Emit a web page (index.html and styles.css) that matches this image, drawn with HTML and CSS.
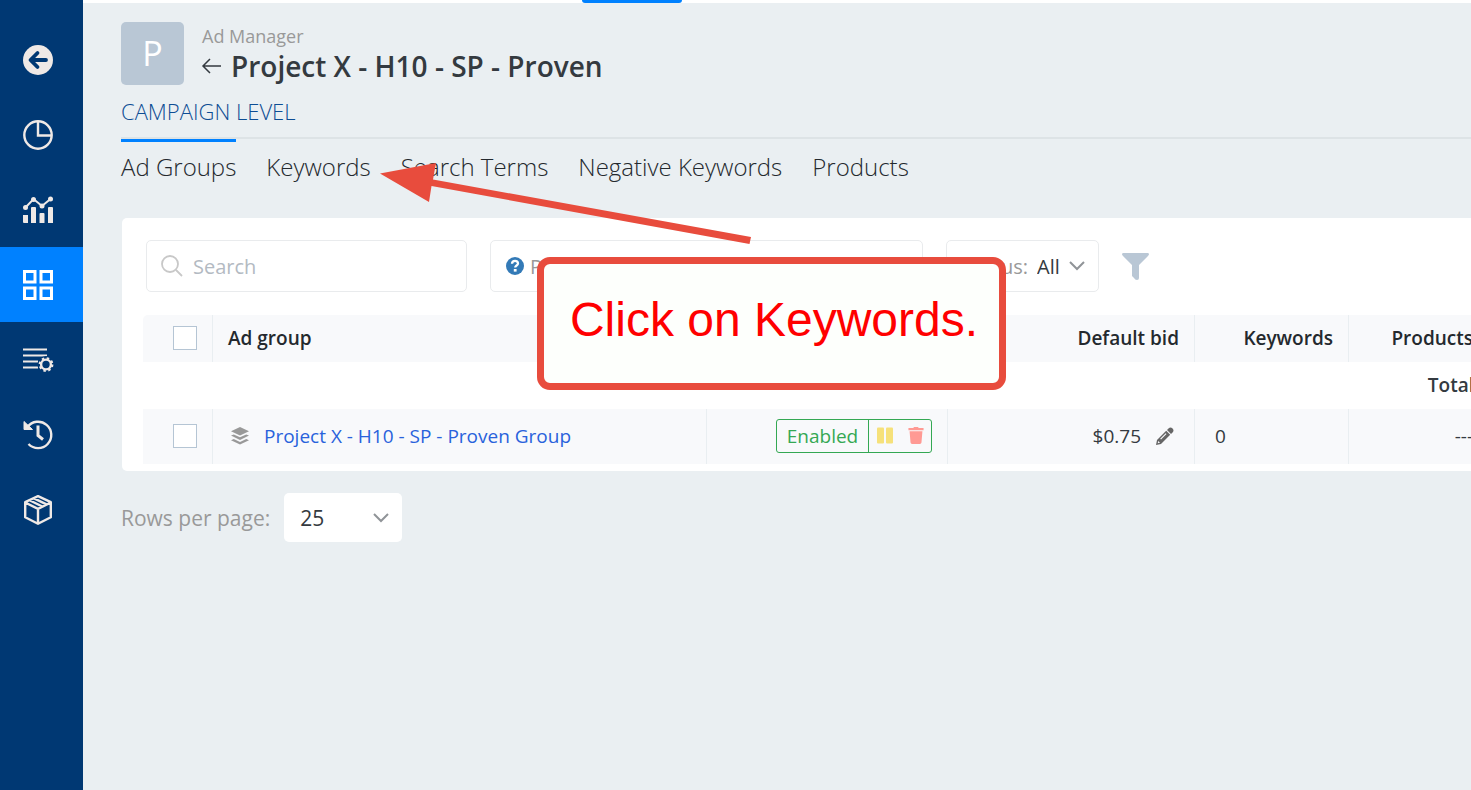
FILE: index.html
```html
<!DOCTYPE html>
<html lang="en">
<head>
    <meta charset="UTF-8">
    <meta name="viewport" content="width=device-width, initial-scale=1.0">
    <title>Ad Manager</title>
    <link rel="stylesheet" href="styles.css">
</head>
<body>
    <nav class="sidebar">
        <a href="#" aria-label="Back">
            <svg viewBox="0 0 30 30">
                <circle cx="15" cy="15" r="15" fill="#efe9e6"/>
                <path d="M14.500 8l-7 7 7 7M8 15H23" fill="none" stroke="#003873" stroke-width="3.800" stroke-linecap="round" stroke-linejoin="round"/>
            </svg>
        </a>
        <a href="#" aria-label="Dashboard">
            <svg viewBox="0 0 30 30" fill="none" stroke="#efe9e6" stroke-width="2.400">
                <circle cx="15" cy="15" r="13.700"/>
                <path d="M15 1v14.500h14"/>
            </svg>
        </a>
        <a href="#" aria-label="Analytics">
            <svg viewBox="0 0 30 30" fill="#efe9e6">
                <path d="M0 20h5v8H1a1 1 0 0 1-1-1zM8 13q0-1 1-1h3q1 0 1 1v15H8zM16.500 19q0-1 1-1h3q1 0 1 1v9h-5zM25 13q0-1 1-1h3q1 0 1 1v15h-5z"/>
                <path d="M2.500 12.500L10.500 4l8.500 7 8.500-7" fill="none" stroke="#efe9e6" stroke-width="2"/>
                <circle cx="2.500" cy="12.500" r="2.500"/>
                <circle cx="10.500" cy="4.500" r="2.500"/>
                <circle cx="19" cy="11" r="2.500"/>
                <circle cx="27.500" cy="4" r="2.500"/>
            </svg>
        </a>
        <a href="#" class="active" aria-label="Ad Manager">
            <svg viewBox="0 0 30 30" fill="none" stroke="#fff" stroke-width="3">
                <path d="M1.500 1.500h10.500v10.500H1.500zM18 1.500h10.500v10.500H18zM1.500 18h10.500v10.500H1.500zM18 18h10.500v10.500H18z"/>
            </svg>
        </a>
        <a href="#" aria-label="Rules">
            <svg viewBox="0 0 30 30" fill="none" stroke="#efe9e6" stroke-width="2.200">
                <path d="M0 4.500h24M0 10.500h24M0 16.500h15M0 22.500h15"/>
                <circle cx="23" cy="19.500" r="7.500" fill="#003873" stroke="#003873"/>
                <circle cx="23" cy="19.500" r="4.900" stroke-width="2.400"/>
                <circle cx="23" cy="19.500" r="6.300" stroke-dasharray="2.400 2.548"/>
            </svg>
        </a>
        <a href="#" aria-label="History">
            <svg viewBox="0 0 30 30" fill="none" stroke="#efe9e6" stroke-width="2.400">
                <path d="M4.500 7A13.200 13.200 0 1 1 5.500 24"/>
                <path d="M1 1.500v8h8.500z" fill="#efe9e6" stroke-width="1"/>
                <path d="M15 5.500v10l5 4" stroke-width="3"/>
            </svg>
        </a>
        <a href="#" aria-label="Products">
            <svg viewBox="0 0 30 30" fill="none" stroke="#efe9e6" stroke-width="2.400" stroke-linejoin="round">
                <path d="M15 1.200l12.800 6v15L15 28.800 2.200 22.200v-15zM2.200 7.500L15 13.800l12.800-6.300M15 13.800v15M7 5.500l12.300 6M11 3.300l12.500 6"/>
            </svg>
        </a>
    </nav>

    <div class="main">
        <div class="topbar"><span class="topbar-tab"></span></div>

        <header class="page-header">
            <div class="avatar">P</div>
            <div>
                <p class="crumb">Ad Manager</p>
                <h1>
                    <a href="#" aria-label="Back to campaigns"><svg viewBox="0 0 20 18" fill="none" stroke="#343a40" stroke-width="1.500"><path d="M8 2L1 9l7 7M1 9h18"/></svg></a>
                    Project X - H10 - SP - Proven
                </h1>
            </div>
        </header>

        <h2 class="level">CAMPAIGN LEVEL</h2>
        <nav class="tabs">
            <a href="#" class="active">Ad Groups</a>
            <a href="#">Keywords</a>
            <a href="#">Search Terms</a>
            <a href="#">Negative Keywords</a>
            <a href="#">Products</a>
        </nav>

        <section class="panel">
            <div class="filters">
                <label class="field search">
                    <svg viewBox="0 0 22 22" fill="none" stroke="#c8c8c8" stroke-width="1.800"><circle cx="9" cy="9" r="8"/><path d="M15 15l6 6"/></svg>
                    <input type="text" placeholder="Search" aria-label="Search">
                </label>
                <div class="field portfolio">
                    <svg viewBox="0 0 18 18"><circle cx="9" cy="9" r="9" fill="#337ab7"/><path d="M6 6.800C6.200 2.800 12 3 12 6.500c0 2-2.800 2-2.800 4" fill="none" stroke="#fff" stroke-width="2.300"/><path d="M7.800 12h2.800v2.600H7.800z" fill="#fff"/></svg>
                    <label for="portfolio">Portfolio:</label>
                    <select id="portfolio"><option>All</option></select>
                </div>
                <div class="field status">
                    <label for="status">Status:</label>
                    <select id="status"><option>All</option></select>
                    <svg class="chevron" viewBox="0 0 16 10"><path d="M1 1l7 7 7-7"/></svg>
                </div>
                <button class="filter-btn" aria-label="Filters">
                    <svg viewBox="0 0 27 27" fill="#b9c7d5"><path d="M1 0h25q2 1 0 3l-9 9v13q0 2-2 2-2 0-3-2l-2-2V12L1 3q-2-2 0-3z"/></svg>
                </button>
            </div>

            <div class="table-wrap">
                <table>
                    <colgroup>
                        <col class="col-check">
                        <col>
                        <col class="col-status">
                        <col class="col-bid">
                        <col class="col-keywords">
                        <col class="col-products">
                    </colgroup>
                    <thead>
                        <tr>
                            <th class="check"><input type="checkbox" aria-label="Select all"></th>
                            <th class="left">Ad group</th>
                            <th></th>
                            <th>Default bid</th>
                            <th>Keywords</th>
                            <th>Products</th>
                        </tr>
                    </thead>
                    <tbody>
                        <tr class="total">
                            <td colspan="6">Total</td>
                        </tr>
                        <tr class="item">
                            <td class="check"><input type="checkbox" aria-label="Select ad group"></td>
                            <td class="left">
                                <div class="name">
                                    <svg viewBox="0 0 18 18" fill="#999"><path d="M9 0l9 4.200-9 4.300L0 4.200zM0 8.600l2.800-1.200L9 10.300l6.200-2.900L18 8.600l-9 4.300zM0 13.200L2.800 12 9 14.900l6.200-2.900 2.800 1.200L9 17.500z"/></svg>
                                    <a href="#">Project X - H10 - SP - Proven Group</a>
                                </div>
                            </td>
                            <td>
                                <div class="state">
                                    <span>Enabled</span>
                                    <button aria-label="Pause"><svg viewBox="0 0 16 16" fill="#f6e17a"><rect width="7" height="16" rx="1"/><rect x="9" width="7" height="16" rx="1"/></svg></button>
                                    <button aria-label="Delete"><svg viewBox="0 0 16 18" fill="#ff9a94"><path d="M0 1h5l1-1h4l1 1h5v2.500H0zM1.200 4.500h13.600l-1 12q-.2 1.500-1.600 1.500H3.800q-1.400 0-1.600-1.500z"/></svg></button>
                                </div>
                            </td>
                            <td>
                                <div class="bid">
                                    $0.75
                                    <button aria-label="Edit bid"><svg viewBox="0 0 18 18" fill="#666"><path d="M12.500 1.500q2-2 4 0t0 4L15 7l-4-4z"/><path fill-rule="evenodd" d="M10.200 3.800l4 4L5 17l-5 1 1-5zM2.300 14l-.6 2.300 2.300-.6zM5 12.500l5.500-5.500-.8-.8-5.500 5.500z"/></svg></button>
                                </div>
                            </td>
                            <td class="count">0</td>
                            <td>---</td>
                        </tr>
                    </tbody>
                </table>
            </div>
        </section>

        <footer class="pager">
            <label for="rows">Rows per page:</label>
            <div class="rows">
                <select id="rows"><option>25</option></select>
                <svg class="chevron" viewBox="0 0 16 10"><path d="M1 1l7 7 7-7"/></svg>
            </div>
        </footer>
    </div>

    <svg class="arrow" viewBox="0 0 371 82">
        <path d="M0 11.500L56 1l-3 16.500L371 75l-1.500 7L51.500 24 49 40z" fill="#e84c3d"/>
    </svg>
    <div class="callout">Click on Keywords.</div>
</body>
</html>
```

FILE: styles.css
```css
* {
    margin: 0;
    padding: 0;
    box-sizing: border-box;
}

body {
    font-family: "Open Sans", "Noto Sans", sans-serif;
    font-size: 20px;
    color: #343a40;
    background: #eaeff2;
    min-height: 100vh;
    display: flex;
    overflow: hidden;
}

a {
    color: inherit;
    text-decoration: none;
}

svg {
    display: block;
    flex-shrink: 0;
    overflow: visible;
}

button,
input,
select {
    font: inherit;
    color: inherit;
    background: none;
    border: none;
    outline: none;
    appearance: none;
}

/* sidebar */
.sidebar {
    width: 83px;
    flex-shrink: 0;
    padding-top: 22px;
    background: #003873;
}

.sidebar a {
    display: flex;
    align-items: center;
    height: 75px;
    padding-left: 23px;
}

.sidebar a.active {
    background: #0081ff;
}

.sidebar svg {
    width: 30px;
    height: 30px;
}

.main {
    flex: 1;
    min-width: 0;
    padding-left: 38px;
}

.topbar {
    height: 3px;
    margin-left: -38px;
    padding-left: 499px;
    background: #fff;
}

.topbar-tab {
    display: block;
    width: 100px;
    height: 3px;
    border-radius: 0 0 4px 4px;
    background: #0081ff;
}

/* header */
.page-header {
    display: flex;
    gap: 18px;
    padding-top: 19px;
}

.avatar {
    width: 63px;
    height: 63px;
    border-radius: 5px;
    background: #b9c7d5;
    color: #fff;
    font-size: 34px;
    line-height: 62px;
    text-align: center;
}

.crumb {
    font-size: 18px;
    line-height: 28px;
    color: #999;
}

h1 {
    display: flex;
    align-items: center;
    gap: 9px;
    font-size: 28px;
    font-weight: 600;
    line-height: 32px;
}

h1 svg {
    width: 20px;
    height: 18px;
}

.level {
    height: 54px;
    padding-top: 12px;
    border-bottom: 2px solid #dde3e6;
    font-size: 22px;
    font-weight: 300;
    line-height: 28px;
    color: #0d4d94;
}

.tabs {
    display: flex;
    gap: 30px;
    height: 79px;
    font-size: 24px;
    font-weight: 300;
    line-height: 56px;
    color: #24292e;
}

.tabs a {
    height: 60px;
}

.tabs .active {
    border-top: 3px solid #0081ff;
    line-height: 50px;
}

/* panel */
.panel {
    margin-left: 1px;
    padding: 22px 0 7px 21px;
    background: #fff;
    border-radius: 5px 0 0 5px;
}

.filters {
    display: flex;
    align-items: center;
    gap: 23px;
    padding-left: 3px;
}

.field {
    display: flex;
    align-items: center;
    height: 52px;
    border: 1px solid #e9ebed;
    border-radius: 5px;
    color: #999;
}

.search {
    width: 321px;
    gap: 10px;
    padding-left: 14px;
}

.search svg {
    width: 22px;
    height: 22px;
}

.search input {
    width: 100%;
}

.search input::placeholder {
    color: #b3bac2;
}

.portfolio {
    width: 433px;
    gap: 6px;
    padding-left: 15px;
}

.portfolio svg {
    width: 18px;
    height: 18px;
}

.status {
    gap: 9px;
    width: 153px;
    padding-right: 13px;
    justify-content: flex-end;
}

.field select {
    color: #343a40;
}

.chevron {
    width: 16px;
    height: 10px;
    fill: none;
    stroke: #909498;
    stroke-width: 2;
}

.filter-btn svg {
    width: 27px;
    height: 27px;
}

/* table */
.table-wrap {
    margin-top: 23px;
    overflow: hidden;
}

table {
    width: calc(100% + 18px);
    table-layout: fixed;
    border-collapse: separate;
    border-spacing: 0;
    font-size: 19px;
}

.col-check { width: 70px; }
.col-status { width: 241px; }
.col-bid { width: 247px; }
.col-keywords { width: 154px; }
.col-products { width: 140px; }

th,
td {
    padding: 0 15px 2px;
    text-align: right;
    background: #f8f9fb;
    border-right: 1px solid #e9eef1;
}

th {
    height: 47px;
    font-weight: 600;
    color: #24292e;
}

th:first-child {
    border-radius: 5px 0 0 0;
}

.total td {
    height: 47px;
    background: #fff;
    border: none;
    font-weight: 600;
}

.item td {
    height: 55px;
}

th.left,
td.left {
    text-align: left;
}

th:nth-child(2) {
    border-right: none;
}

td.count {
    padding-left: 20px;
    text-align: left;
}

input[type="checkbox"] {
    display: block;
    width: 24px;
    height: 24px;
    margin-left: auto;
    background: #fff;
    border: 1px solid #b5c5d4;
}

.name {
    display: flex;
    align-items: center;
    gap: 15px;
    padding-left: 3px;
    color: #2962dc;
}

.name svg {
    width: 18px;
    height: 18px;
}

.state {
    display: flex;
    align-items: center;
    width: 156px;
    height: 34px;
    margin-left: auto;
    border: 1px solid #34a853;
    border-radius: 3px;
    color: #34a853;
}

.state span {
    width: 92px;
    line-height: 32px;
    text-align: center;
    border-right: 1px solid #34a853;
}

.state button {
    flex: 1;
}

.state svg {
    height: 17px;
    width: 16px;
    margin: auto;
}

.bid {
    display: flex;
    align-items: center;
    justify-content: flex-end;
    gap: 15px;
    padding-right: 5px;
}

.bid svg {
    width: 18px;
    height: 18px;
}

/* pager */
.pager {
    display: flex;
    align-items: center;
    gap: 14px;
    padding-top: 22px;
    font-size: 21px;
    color: #999;
}

.rows {
    display: flex;
    align-items: center;
    width: 118px;
    height: 49px;
    padding: 0 13px 0 16px;
    background: #fff;
    border-radius: 5px;
    color: #343a40;
}

.rows select {
    flex: 1;
}

/* tutorial overlay */
.arrow {
    position: absolute;
    left: 380px;
    top: 162px;
    width: 371px;
    height: 82px;
}

.callout {
    position: absolute;
    left: 537px;
    top: 257px;
    width: 469px;
    height: 133px;
    padding: 28px 0 0 5px;
    border: 7px solid #e84c3d;
    border-radius: 13px;
    background: #fdfffc;
    font-family: "Liberation Sans", Arial, sans-serif;
    font-size: 48px;
    line-height: 55px;
    color: #f00;
    text-align: center;
}
```
